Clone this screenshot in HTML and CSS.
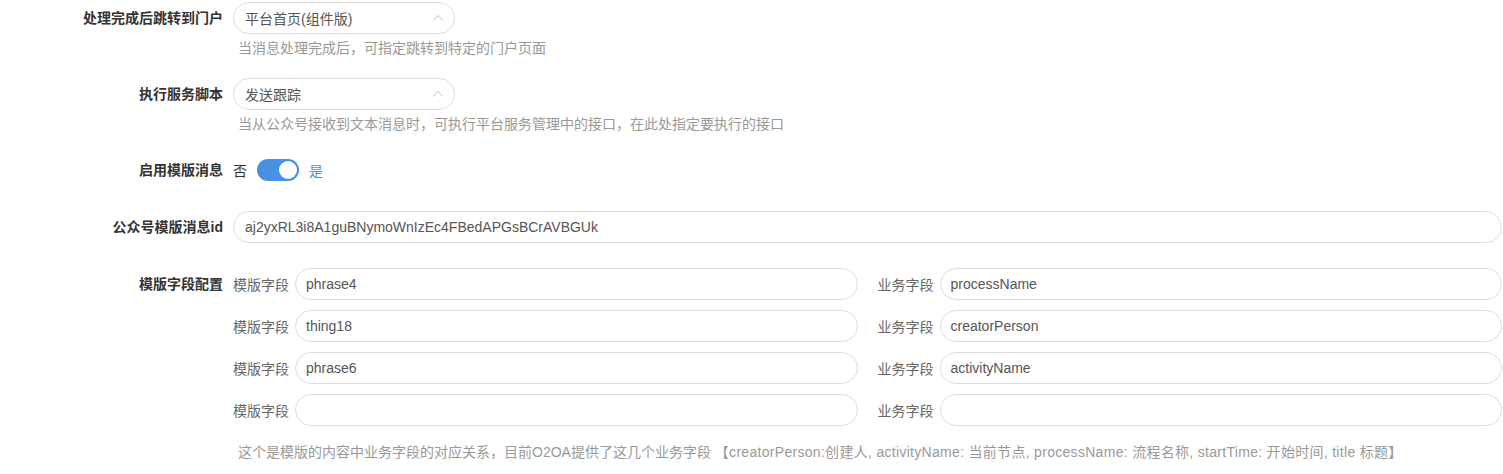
FILE: index.html
```html
<!DOCTYPE html>
<html lang="zh">
<head>
<meta charset="utf-8">
<title>消息配置</title>
<link rel="stylesheet" href="styles.css">
</head>
<body>
<div class="form">
  <div class="row has-help">
    <div class="label">处理完成后跳转到门户</div>
    <div class="field">
      <div class="select">
        <span class="select-text">平台首页(组件版)</span>
        <svg class="chev" width="12" height="8" viewBox="0 0 12 8"><path d="M1 6.5 L6 1.5 L11 6.5" fill="none" stroke="#bbb" stroke-width="1"/></svg>
      </div>
      <div class="help">当消息处理完成后，可指定跳转到特定的门户页面</div>
    </div>
  </div>
  <div class="row has-help">
    <div class="label">执行服务脚本</div>
    <div class="field">
      <div class="select">
        <span class="select-text">发送跟踪</span>
        <svg class="chev" width="12" height="8" viewBox="0 0 12 8"><path d="M1 6.5 L6 1.5 L11 6.5" fill="none" stroke="#bbb" stroke-width="1"/></svg>
      </div>
      <div class="help">当从公众号接收到文本消息时，可执行平台服务管理中的接口，在此处指定要执行的接口</div>
    </div>
  </div>
  <div class="row">
    <div class="label label-mid">启用模版消息</div>
    <div class="field switch-row">
      <span class="sw-off">否</span>
      <span class="switch"><span class="knob"></span></span>
      <span class="sw-on">是</span>
    </div>
  </div>
  <div class="row">
    <div class="label label-mid">公众号模版消息id</div>
    <div class="field">
      <div class="input">aj2yxRL3i8A1guBNymoWnIzEc4FBedAPGsBCrAVBGUk</div>
    </div>
  </div>
  <div class="row">
    <div class="label label-mid">模版字段配置</div>
    <div class="field">
      <div class="map-grid">
        <div class="pair"><span class="pair-label">模版字段</span><div class="input">phrase4</div></div>
        <div class="pair"><span class="pair-label">业务字段</span><div class="input">processName</div></div>
        <div class="pair"><span class="pair-label">模版字段</span><div class="input">thing18</div></div>
        <div class="pair"><span class="pair-label">业务字段</span><div class="input">creatorPerson</div></div>
        <div class="pair"><span class="pair-label">模版字段</span><div class="input">phrase6</div></div>
        <div class="pair"><span class="pair-label">业务字段</span><div class="input">activityName</div></div>
        <div class="pair"><span class="pair-label">模版字段</span><div class="input"></div></div>
        <div class="pair"><span class="pair-label">业务字段</span><div class="input"></div></div>
      </div>
      <div class="note">这个是模版的内容中业务字段的对应关系，目前O2OA提供了这几个业务字段 <span class="note-list">【creatorPerson:创建人, activityName: 当前节点, processName: 流程名称, startTime: 开始时间, title 标题】</span></div>
    </div>
  </div>
</div>
</body>
</html>
```

FILE: styles.css
```css
html, body {
  margin: 0;
  padding: 0;
  background: #fff;
}
body {
  font-family: "Liberation Sans", "Noto Sans CJK SC", sans-serif;
  font-size: 14px;
  color: #333;
}
.form {
  padding-top: 2px;
  width: 1502px;
}
.row {
  display: grid;
  grid-template-columns: 223px 1fr;
  column-gap: 10px;
  margin-bottom: 25px;
}
.row.has-help {
  margin-bottom: 20px;
}
.label {
  text-align: right;
  font-weight: bold;
  color: #333;
  line-height: 32px;
  white-space: nowrap;
}
.field {
  min-width: 0;
}
.select {
  box-sizing: border-box;
  width: 222px;
  height: 32px;
  border: 1px solid #ddd;
  border-radius: 16px;
  display: flex;
  align-items: center;
  justify-content: space-between;
  padding: 0 10px 0 11px;
}
.select-text {
  color: #555;
}
.chev {
  display: block;
}
.help {
  color: #999;
  line-height: 20px;
  margin-top: 4px;
  padding-left: 5px;
}
.switch-row {
  display: flex;
  align-items: center;
  height: 32px;
}
.sw-off {
  color: #333;
  margin-right: 10px;
}
.switch {
  position: relative;
  width: 42px;
  height: 22px;
  border-radius: 11px;
  background: #4a90e2;
  margin-right: 10px;
}
.knob {
  position: absolute;
  right: 2px;
  top: 2px;
  width: 18px;
  height: 18px;
  border-radius: 50%;
  background: #fff;
}
.sw-on {
  color: #4a90e2;
}
.input {
  box-sizing: border-box;
  height: 32px;
  line-height: 30px;
  border: 1px solid #ddd;
  border-radius: 16px;
  padding: 0 11px;
  color: #555;
  white-space: nowrap;
  overflow: hidden;
  width: 100%;
}
.map-grid {
  display: grid;
  grid-template-columns: 1fr 1fr;
  column-gap: 20px;
  row-gap: 10px;
}
.pair {
  display: flex;
  align-items: center;
  min-width: 0;
}
.pair-label {
  color: #666;
  width: 56px;
  flex: none;
  margin-right: 6px;
  white-space: nowrap;
}
.pair .input {
  flex: 1;
  min-width: 0;
  padding-left: 10px;
}
.note {
  color: #999;
  line-height: 20px;
  margin-top: 16px;
  padding-left: 5px;
  white-space: nowrap;
}
.note-list {
  letter-spacing: 0.3px;
}
```
